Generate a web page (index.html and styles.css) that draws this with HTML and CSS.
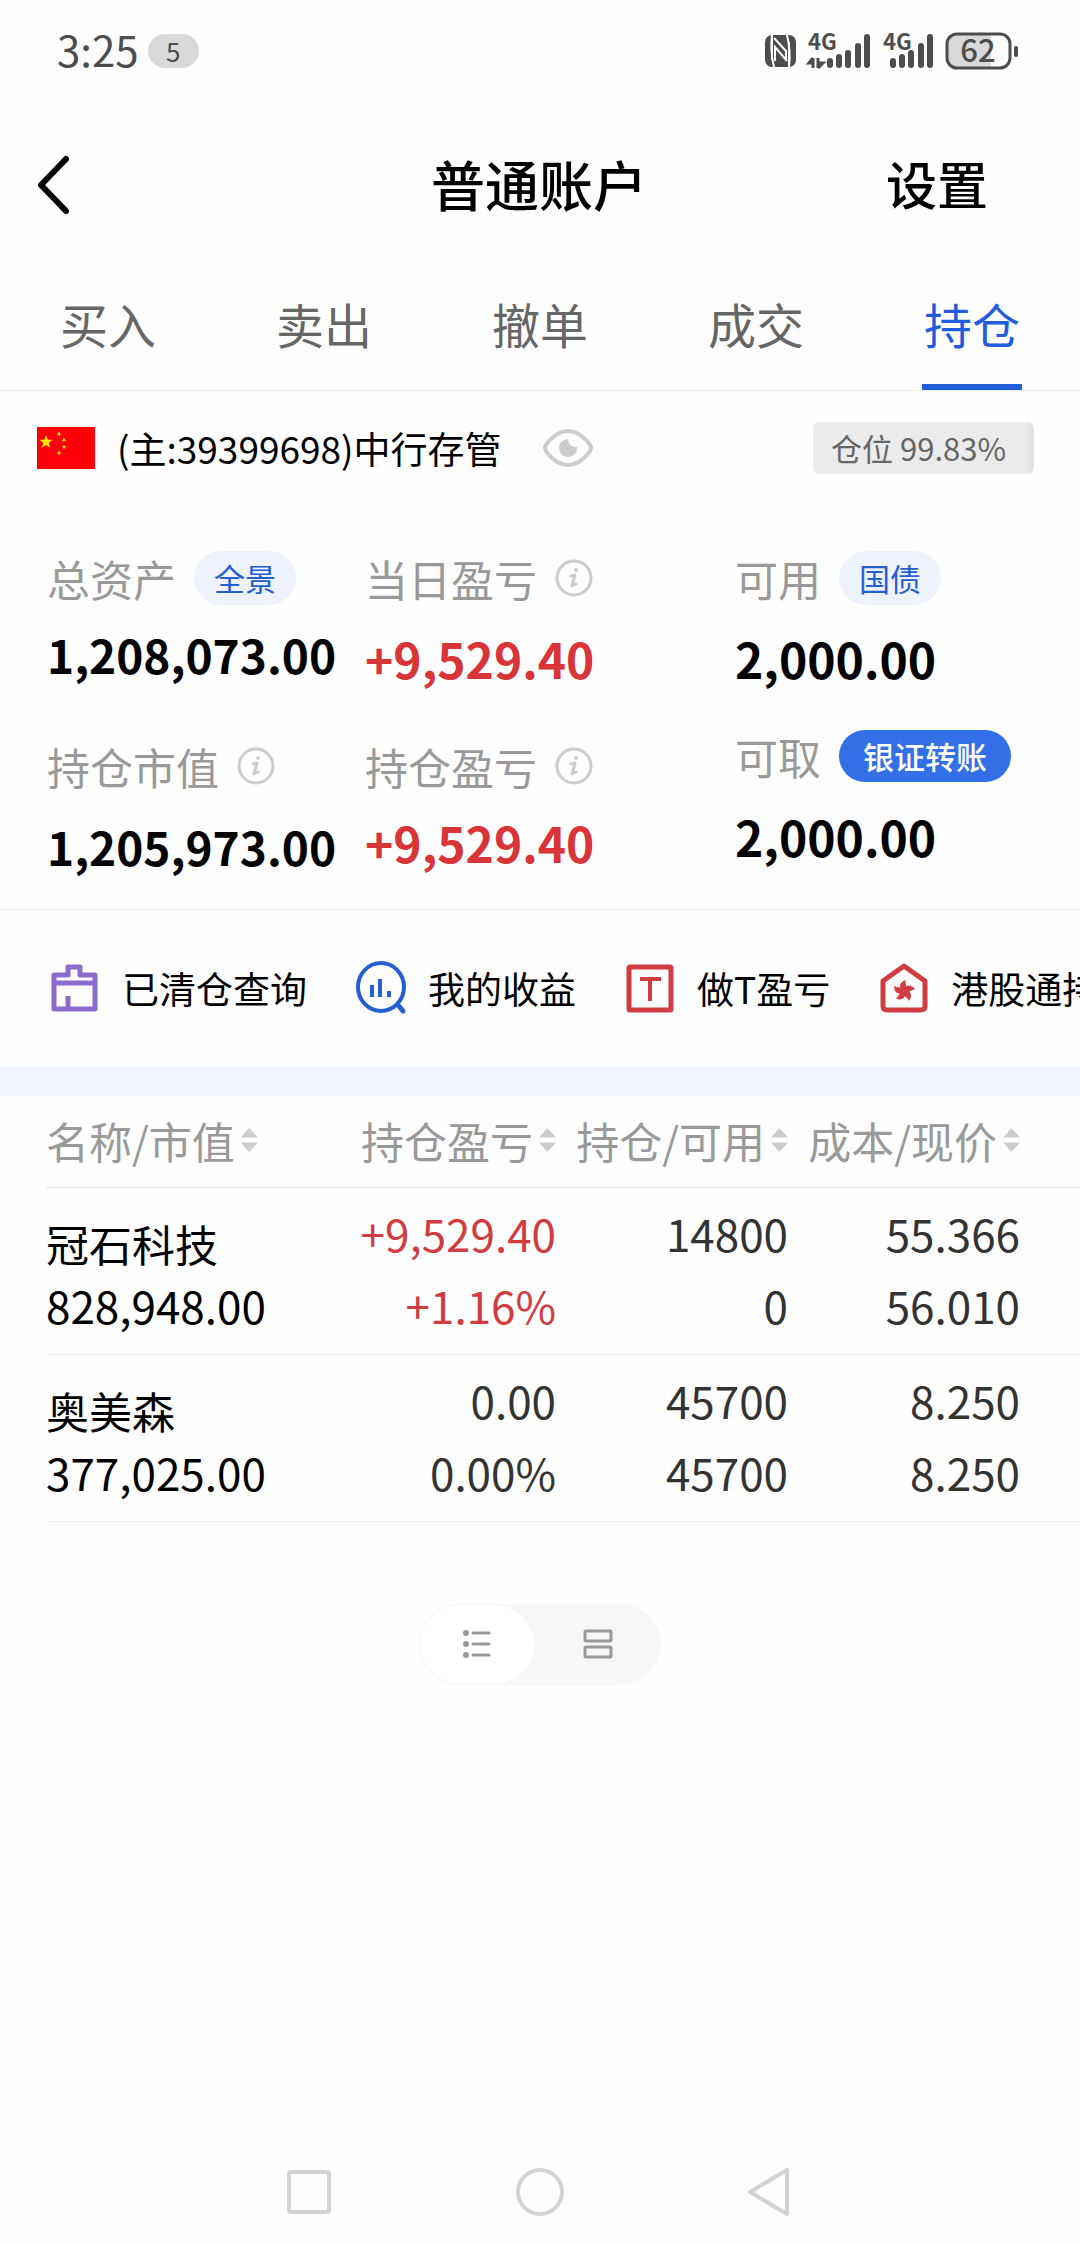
FILE: index.html
```html
<!DOCTYPE html>
<html lang="zh-CN">
<head>
  <meta charset="UTF-8" />
  <meta name="viewport" content="width=device-width, initial-scale=1" />
  <title>普通账户</title>
  <link rel="stylesheet" href="styles.css">
</head>
<body>

  <div class="status-bar">
    <span class="status-time">3:25</span>
    <span class="status-count">5</span>
    <div class="status-icons">
      <!-- NFC -->
      <svg width="31" height="34" viewBox="0 0 31 34" aria-hidden="true">
        <rect x="0" y="1" width="31" height="32" rx="7" fill="#4d4d4d"/>
        <path d="M7 1 Q5 17 9 33 M24 33 Q26 17 22 1" fill="none" stroke="#fff" stroke-width="2"/>
        <path d="M9 4 L21 17 V26 M10 27 V13 L22 27" fill="none" stroke="#fff" stroke-width="2"/>
        <path d="M7 2 V26 M24 8 V32" fill="none" stroke="#fff" stroke-width="2"/>
      </svg>
      <svg class="signal" width="63" height="44" viewBox="0 -4 63 44" aria-hidden="true">
        <text class="signal-text" x="0" y="17">4G</text>
        <g stroke="#4d4d4d" stroke-width="6" stroke-linecap="round">
          <path d="M22 28v4M31 24v8M40 20v12M50 13v19M59 4v28"/>
        </g>
        <path d="M5 25v10M5 25l-4 5h4M10 25v10M10 35l5-5h-5" fill="none" stroke="#4d4d4d" stroke-width="3"/>
      </svg>
      <svg class="signal" width="50" height="44" viewBox="0 -4 50 44" aria-hidden="true">
        <text class="signal-text" x="0" y="17">4G</text>
        <g stroke="#4d4d4d" stroke-width="6" stroke-linecap="round">
          <path d="M10 28v4M19 24v8M28 20v12M38 13v19M47 4v28"/>
        </g>
      </svg>
      <svg width="74" height="46" viewBox="0 -4 74 46" aria-hidden="true">
        <path d="M12 2H46V36H12Q3 36 3 27V11Q3 2 12 2Z" fill="#d9d9d9"/>
        <rect x="2" y="2" width="63" height="34" rx="10" fill="none" stroke="#4d4d4d" stroke-width="3"/>
        <rect x="69" y="14" width="4" height="11" rx="2" fill="#4d4d4d"/>
        <text class="battery-text" x="33" y="30" text-anchor="middle">62</text>
      </svg>
    </div>
  </div>

  <header class="header">
    <button class="back" aria-label="返回">
      <svg width="34" height="60" viewBox="0 0 34 60" aria-hidden="true">
        <path d="M29 4 L4 30 L29 56" fill="none" stroke="#000" stroke-width="6" stroke-linecap="round" stroke-linejoin="round"/>
      </svg>
    </button>
    <h1 class="title">普通账户</h1>
    <button class="settings">设置</button>
  </header>

  <nav class="tabs">
    <a href="#" class="tab">买入</a>
    <a href="#" class="tab">卖出</a>
    <a href="#" class="tab">撤单</a>
    <a href="#" class="tab">成交</a>
    <a href="#" class="tab active" aria-current="page">持仓</a>
  </nav>

  <main>
    <section class="account">
      <svg width="58" height="42" viewBox="0 0 58 42" aria-hidden="true">
        <defs>
          <path id="star" d="M0 -10 L2.4 -3.2 L9.5 -3.1 L3.8 1.2 L5.9 8.1 L0 4 L-5.9 8.1 L-3.8 1.2 L-9.5 -3.1 L-2.4 -3.2 Z"/>
        </defs>
        <rect width="58" height="42" fill="#fb0007"/>
        <g fill="#ffe600">
          <use href="#star" transform="translate(9 15) scale(.72)"/>
          <use href="#star" transform="translate(22 7) rotate(20) scale(.26)"/>
          <use href="#star" transform="translate(27 13) rotate(40) scale(.26)"/>
          <use href="#star" transform="translate(27 20) scale(.26)"/>
          <use href="#star" transform="translate(22 26) rotate(20) scale(.26)"/>
        </g>
      </svg>
      <span class="account-name">(主:39399698)中行存管</span>
      <button class="eye" aria-label="隐藏金额">
        <svg width="52" height="40" viewBox="0 0 52 40" aria-hidden="true">
          <path d="M3 20 C3 16 14 3 26 3 S49 16 49 20 S38 37 26 37 S3 24 3 20 Z" fill="none" stroke="#ccc" stroke-width="4"/>
          <path d="M26 11 A9 9 0 1 0 35 19 Q27 20 26 11 Z" fill="#ccc"/>
        </svg>
      </button>
      <span class="position">仓位 99.83%</span>
    </section>

    <section class="summary">
      <div class="stats stats-asset">
        <div class="stat stat-near">
          <div class="stat-label">总资产 <button class="pill">全景</button></div>
          <div class="stat-value">1,208,073.00</div>
        </div>
        <div class="stat">
          <div class="stat-label">持仓市值
            <svg width="38" height="38" viewBox="0 0 38 38" aria-hidden="true">
              <circle cx="19" cy="19" r="17" fill="none" stroke="#ccc" stroke-width="3"/>
              <circle cx="21" cy="11" r="2" fill="#ccc"/>
              <path d="M16 17 L20 16 L17 27 L21 25" fill="none" stroke="#ccc" stroke-width="3" stroke-linejoin="round" stroke-linecap="round"/>
            </svg>
          </div>
          <div class="stat-value">1,205,973.00</div>
        </div>
      </div>
      <div class="stats stats-profit">
        <div class="stat">
          <div class="stat-label">当日盈亏
            <svg width="38" height="38" viewBox="0 0 38 38" aria-hidden="true">
              <circle cx="19" cy="19" r="17" fill="none" stroke="#ccc" stroke-width="3"/>
              <circle cx="21" cy="11" r="2" fill="#ccc"/>
              <path d="M16 17 L20 16 L17 27 L21 25" fill="none" stroke="#ccc" stroke-width="3" stroke-linejoin="round" stroke-linecap="round"/>
            </svg>
          </div>
          <div class="stat-value up">+9,529.40</div>
        </div>
        <div class="stat stat-near">
          <div class="stat-label">持仓盈亏
            <svg width="38" height="38" viewBox="0 0 38 38" aria-hidden="true">
              <circle cx="19" cy="19" r="17" fill="none" stroke="#ccc" stroke-width="3"/>
              <circle cx="21" cy="11" r="2" fill="#ccc"/>
              <path d="M16 17 L20 16 L17 27 L21 25" fill="none" stroke="#ccc" stroke-width="3" stroke-linejoin="round" stroke-linecap="round"/>
            </svg>
          </div>
          <div class="stat-value up">+9,529.40</div>
        </div>
      </div>
      <div class="stats stats-cash">
        <div class="stat">
          <div class="stat-label">可用 <button class="pill">国债</button></div>
          <div class="stat-value">2,000.00</div>
        </div>
        <div class="stat">
          <div class="stat-label">可取 <button class="pill pill-solid">银证转账</button></div>
          <div class="stat-value">2,000.00</div>
        </div>
      </div>
    </section>

    <section class="shortcuts">
      <a href="#" class="shortcut">
        <svg width="52" height="54" viewBox="0 0 52 54" aria-hidden="true">
          <path d="M5 14H19V6H31V14H46V48H5Z M5 22H46 M19 35V48" fill="none" stroke="#8b6bcb" stroke-width="5" stroke-linejoin="round"/>
        </svg>
        已清仓查询
      </a>
      <a href="#" class="shortcut">
        <svg width="52" height="54" viewBox="0 0 52 54" aria-hidden="true">
          <ellipse cx="26" cy="26" rx="23" ry="24" fill="none" stroke="#245fd6" stroke-width="4"/>
          <path d="M43 44 L48 50" stroke="#245fd6" stroke-width="5" stroke-linecap="round"/>
          <path d="M17 24v12M25 18v18M34 30v6" stroke="#245fd6" stroke-width="4"/>
        </svg>
        我的收益
      </a>
      <a href="#" class="shortcut">
        <svg width="52" height="54" viewBox="0 0 52 54" aria-hidden="true">
          <rect x="5" y="6" width="42" height="43" rx="1" fill="none" stroke="#d03c40" stroke-width="5"/>
          <path d="M16 18H37M26 18V40" fill="none" stroke="#d03c40" stroke-width="4"/>
        </svg>
        做T盈亏
      </a>
      <a href="#" class="shortcut">
        <svg width="52" height="54" viewBox="0 0 52 54" aria-hidden="true">
          <path d="M26 5 L47 20 V45 Q47 49 43 49 H9 Q5 49 5 45 V20 Z" fill="none" stroke="#d03c40" stroke-width="5" stroke-linejoin="round"/>
          <defs>
            <path id="petal" d="M0 0 C-6 -3 -5 -9 2 -11 C0 -7 5 -5 0 0 Z"/>
          </defs>
          <g fill="#d03c40" transform="translate(26 30)">
            <use href="#petal"/>
            <use href="#petal" transform="rotate(72)"/>
            <use href="#petal" transform="rotate(144)"/>
            <use href="#petal" transform="rotate(216)"/>
            <use href="#petal" transform="rotate(288)"/>
          </g>
        </svg>
        港股通持仓
      </a>
    </section>

    <section class="positions">
      <table class="table">
        <colgroup>
          <col><col class="col-profit"><col class="col-amount"><col class="col-price">
        </colgroup>
        <thead>
          <tr>
            <th><button class="sort">名称/市值</button></th>
            <th><button class="sort">持仓盈亏</button></th>
            <th><button class="sort">持仓/可用</button></th>
            <th><button class="sort">成本/现价</button></th>
          </tr>
        </thead>
        <tbody>
          <tr>
            <td><div class="name">冠石科技</div><div>828,948.00</div></td>
            <td class="up"><div>+9,529.40</div><div>+1.16%</div></td>
            <td><div>14800</div><div>0</div></td>
            <td><div>55.366</div><div>56.010</div></td>
          </tr>
          <tr>
            <td><div class="name">奥美森</div><div>377,025.00</div></td>
            <td><div>0.00</div><div>0.00%</div></td>
            <td><div>45700</div><div>45700</div></td>
            <td><div>8.250</div><div>8.250</div></td>
          </tr>
        </tbody>
      </table>
    </section>

    <div class="view-switch">
      <button class="view active" aria-label="列表视图">
        <svg width="30" height="32" viewBox="0 0 30 32" aria-hidden="true">
          <g fill="#999">
            <circle cx="4" cy="5" r="3"/><circle cx="4" cy="16" r="3"/><circle cx="4" cy="27" r="3"/>
          </g>
          <path d="M11 5H27M11 16H27M11 27H27" stroke="#999" stroke-width="3" stroke-linecap="round"/>
        </svg>
      </button>
      <button class="view" aria-label="卡片视图">
        <svg width="30" height="32" viewBox="0 0 30 32" aria-hidden="true">
          <rect x="2" y="3" width="26" height="10" rx="1" fill="none" stroke="#999" stroke-width="3"/>
          <rect x="2" y="19" width="26" height="10" rx="1" fill="none" stroke="#999" stroke-width="3"/>
        </svg>
      </button>
    </div>
  </main>

  <footer class="nav-bar">
    <button aria-label="最近任务">
      <svg width="48" height="48" viewBox="0 0 48 48" aria-hidden="true">
        <rect x="4" y="4" width="40" height="40" rx="2" fill="none" stroke="#d3d3d3" stroke-width="4"/>
      </svg>
    </button>
    <button aria-label="主屏幕">
      <svg width="48" height="48" viewBox="0 0 48 48" aria-hidden="true">
        <circle cx="24" cy="24" r="22" fill="none" stroke="#d3d3d3" stroke-width="4"/>
      </svg>
    </button>
    <button aria-label="返回上一级">
      <svg width="48" height="48" viewBox="0 0 48 48" aria-hidden="true">
        <path d="M40 2 V46 L3 24 Z" fill="none" stroke="#d3d3d3" stroke-width="4" stroke-linejoin="round"/>
      </svg>
    </button>
  </footer>

</body>
</html>
```
FILE: styles.css
```css
* {
  box-sizing: border-box;
}
body {
  margin: 0;
  min-height: 100vh;
  display: flex;
  flex-direction: column;
  background: #fefefe;
  color: #000;
  font-family: "Noto Sans CJK SC", sans-serif;
  font-size: 43px;
  overflow-x: hidden;
}
button {
  font: inherit;
  color: inherit;
  background: none;
  border: none;
  padding: 0;
  cursor: pointer;
}
a {
  color: inherit;
  text-decoration: none;
}
svg {
  display: block;
  flex: none;
}
main {
  flex: 1;
}
.up {
  color: #d93438;
}

/* Status bar */
.status-bar {
  display: flex;
  align-items: center;
  height: 102px;
  padding: 0 61px 0 57px;
  color: #4d4d4d;
}
.status-time {
  padding-bottom: 4px;
  font-size: 42px;
  line-height: 60px;
}
.status-count {
  width: 51px;
  margin-left: 9px;
  border-radius: 17px;
  background: #d9d9d9;
  font-size: 26px;
  line-height: 34px;
  text-align: center;
}
.status-icons {
  display: flex;
  align-items: center;
  gap: 12px;
  margin-left: auto;
}
.signal {
  overflow: visible;
}
.signal-text {
  font-size: 22px;
  font-weight: 700;
  fill: #4d4d4d;
}
.battery-text {
  font-size: 31px;
  font-weight: 500;
  fill: #4d4d4d;
}

/* Page header */
.header {
  display: grid;
  grid-template-columns: 1fr auto 1fr;
  align-items: center;
  height: 166px;
  padding: 0 92px 0 37px;
}
.back {
  justify-self: start;
}
.title {
  margin: 0;
  padding: 0 0 4px 53px;
  font-size: 54px;
  font-weight: 500;
}
.settings {
  justify-self: end;
  padding-bottom: 4px;
  font-size: 51px;
  font-weight: 500;
}

/* Tabs */
.tabs {
  display: grid;
  grid-template-columns: repeat(5, 1fr);
  justify-items: center;
  border-bottom: 1px solid #ededed;
}
.tab {
  height: 122px;
  padding: 17px 2px 0;
  border-bottom: 6px solid transparent;
  color: #666;
  font-size: 48px;
  line-height: 76px;
}
.tab.active {
  color: #205dda;
  border-color: #205dda;
}

/* Account row */
.account {
  display: flex;
  align-items: center;
  height: 114px;
  padding: 0 46px 0 37px;
}
.account-name {
  margin-left: 22px;
  font-size: 37px;
}
.eye {
  margin-left: 40px;
}
.position {
  margin-left: auto;
  padding: 0 22px 0 18px;
  border-right: 6px solid #e3e3e3;
  border-radius: 6px;
  background: #ebebeb;
  color: #666;
  font-size: 31px;
  line-height: 52px;
}

/* Summary */
.summary {
  display: grid;
  grid-template-columns: 318fr 370fr 345fr;
  padding: 45px 0 33px 47px;
  border-bottom: 1px solid #ededed;
}
.stats {
  display: flex;
  flex-direction: column;
}
.stats-asset {
  gap: 54px;
}
.stats-profit {
  gap: 50px;
}
.stats-cash {
  gap: 40px;
}
.stat {
  display: flex;
  flex-direction: column;
  gap: 22px;
}
.stat-near {
  gap: 18px;
}
.stat-label {
  display: flex;
  align-items: center;
  gap: 18px;
  height: 56px;
  color: #999;
  white-space: nowrap;
}
.stat-value {
  font-size: 48px;
  font-weight: 700;
  line-height: 60px;
}
.stats-asset .stat-value {
  font-size: 46px;
}
.pill {
  padding: 0 20px;
  border-radius: 28px;
  background: #edf2fd;
  color: #245fd0;
  font-size: 31px;
  line-height: 54px;
}
.pill-solid {
  padding: 0 24px;
  background: #336fe6;
  color: #fff;
  font-weight: 500;
  line-height: 52px;
}

/* Shortcuts */
.shortcuts {
  display: flex;
  gap: 48px;
  height: 186px;
  padding-left: 49px;
  border-bottom: 30px solid #f2f5fe;
  overflow: hidden;
}
.shortcut {
  display: flex;
  align-items: center;
  gap: 21px;
  font-size: 37px;
  white-space: nowrap;
}

/* Positions */
.positions {
  padding-left: 46px;
}
.table {
  width: 100%;
  table-layout: fixed;
  border-collapse: collapse;
}
.col-profit {
  width: 210px;
}
.col-amount {
  width: 232px;
}
.col-price {
  width: 292px;
}
.table th,
.table td {
  padding: 0;
  text-align: right;
  vertical-align: top;
  white-space: nowrap;
  border-bottom: 1px solid #f0f0f0;
}
.table th:first-child,
.table td:first-child {
  text-align: left;
}
.table th:last-child,
.table td:last-child {
  padding-right: 60px;
}
.table th {
  height: 91px;
  border-color: #e3e3e3;
  color: #999;
  font-weight: 400;
}
.sort {
  display: inline-flex;
  align-items: center;
  gap: 6px;
  line-height: 88px;
}
.sort::after {
  content: "";
  width: 17px;
  height: 24px;
  background: #ccc;
  clip-path: polygon(50% 0, 100% 40%, 0 40%, 0 60%, 100% 60%, 50% 100%, 0 60%, 0 40%);
}
.table td {
  padding: 9px 0 13px;
  color: #333;
  font-size: 44px;
  line-height: 72px;
}
.table td.up {
  color: #d03c40;
}
.table td:first-child {
  padding-top: 24px;
  color: #000;
  line-height: 62px;
}
.name {
  font-size: 43px;
}

/* List / card switch */
.view-switch {
  display: flex;
  width: 242px;
  margin: 82px auto 0;
  border-radius: 41px;
  background: #f7f7f7;
}
.view {
  display: flex;
  flex: 1;
  align-items: center;
  justify-content: center;
  height: 81px;
  border-radius: 41px;
}
.view.active {
  flex: 0 0 116px;
  border: 1px solid #f7f7f7;
  background: #fff;
}

/* System navigation */
.nav-bar {
  display: flex;
  justify-content: center;
  gap: 183px;
  padding: 28px 0;
}
```
